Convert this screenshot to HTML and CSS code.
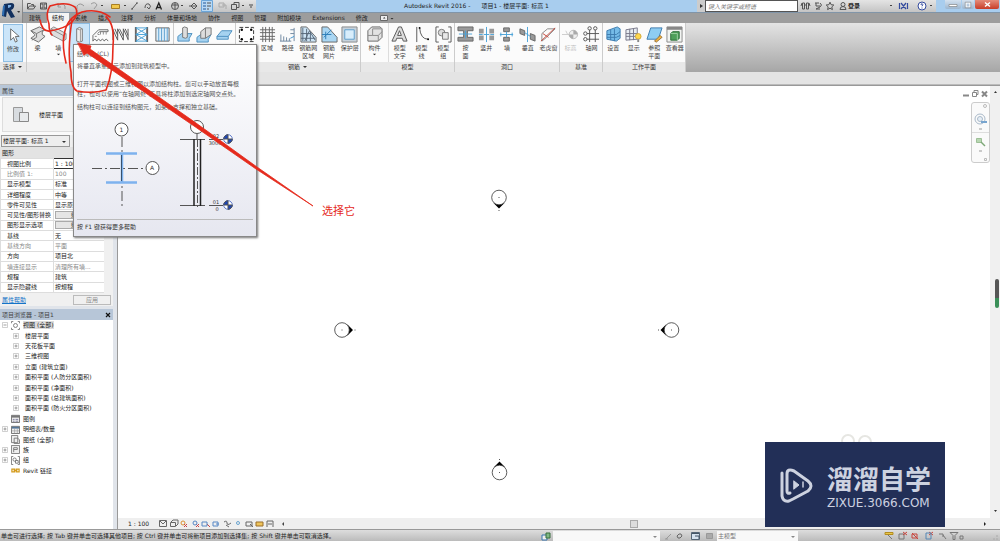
FILE: index.html
```html
<!DOCTYPE html>
<html lang="zh-CN">
<head>
<meta charset="utf-8">
<title>Autodesk Revit 2016 - 项目1</title>
<link rel="stylesheet" href="styles.css">
</head>
<body>
<svg class="defs" aria-hidden="true">
  <symbol id="dot-menu" viewBox="0 0 6 6"><path d="M1 2h4L3 4z" fill="#333"/></symbol>
  <symbol id="plus" viewBox="0 0 6 6"><path d="M.5.5h5v5h-5z" fill="#fff" stroke="#bbb" stroke-width=".7"/><path d="M1.500 3h3M3 1.500v3" stroke="#777" stroke-width=".7"/></symbol>
  <symbol id="minus" viewBox="0 0 6 6"><path d="M.5.5h5v5h-5z" fill="#fff" stroke="#bbb" stroke-width=".7"/><path d="M1.500 3h3" stroke="#777" stroke-width=".7"/></symbol>
  <symbol id="level" viewBox="0 0 10 10"><circle cx="5" cy="5" r="4.300" fill="#fff" stroke="#1c46b8" stroke-width=".7"/><path d="M5 5V.7A4.300 4.300 0 0 0 .7 5zM5 5v4.300A4.300 4.300 0 0 0 9.300 5z" fill="#1c46b8"/></symbol>
</svg>

<header class="header">
  <button class="app" aria-label="应用程序菜单">
    <svg width="22" height="22" viewBox="0 0 22 22"><path d="M4 3l7-1q4 0 3 4-1 3-3 3l4 7-4 1-4-7-1 6-4-1z" fill="#12305e"/><path d="M8 4h3q1 2-3 3z" fill="#7fb2e6"/><path d="M3 5l2-1-1 11-2-1z" fill="#2f6fb5"/><path d="M17 10h3l-1 2z" fill="#333"/></svg>
  </button>
  <div class="titlebar">
    <div class="quick">
      <svg width="233" height="12" viewBox="0 0 233 12" fill="none" stroke="#555" stroke-width="1">
        <path d="M4.500 9V3.500h3l1 1h2v2M4.500 9h6l2-3h-6zM17.500 3h6v6h-6zM19 3v2h3V3M19 9V7h3v2"/>
        <path d="M35 6q4-4 7 0v3M35 3v4h3M61 6q-4-4-7 0v3M68 4q4-3 6 1l-3 4" stroke="#999"/>
        <path d="M88.500 4.500h8v4h-8z" fill="#f1c84b" stroke="#a87e24"/><path d="M109 9l5-6M108 9h2M113 3h2M122 8q0-5 4-4 3 2 0 5l-2-2"/>
        <path d="M133 9.500l2.800-6.500 2.700 6.500M134 7.500h4" stroke="#222" stroke-width="1.300"/>
        <circle cx="152" cy="6" r="3.500" fill="#ccc"/><path d="M149 5h6M152 3v6M166 6h8M168 6l3-3 3 3-3 3z"/>
        <path d="M178.500.500h11v11h-11z" fill="#b8d9f5" stroke="#6ba6da"/><path d="M180 3h3M180 6h3M180 9h3" stroke="#23589b"/><path d="M184 3h4M184 6h4M184 9h2"/>
        <path d="M196 3h5v4h-5zM199 5h4v4" stroke="#aaa"/><path d="M208.500 4.500h5v5h-5zM211 4V2.500h5v5h-2"/>
        <path d="M27 5.500h2M48 5.500h2M78 5.500h2M101 5.500h2M158 5.500h2M219 5.500h2M226 5h4M227 7h2" stroke="#444"/>
      </svg>
    </div>
    <h1 class="title"><span>Autodesk Revit 2016 -</span><span>项目1 - 楼层平面: 标高 1</span></h1>
    <button class="expand" aria-label="展开搜索"><svg width="8" height="12" viewBox="0 0 8 12"><path d="M3 4v4l3-2z" fill="#333"/></svg></button>
    <input class="search" aria-label="搜索" placeholder="键入关键字或短语">
    <div class="info">
      <svg width="50" height="12" viewBox="0 0 50 12" fill="none" stroke="#555"><path d="M4.500 3v6h2V3zM8.500 3v6h2V3zM3 6l1-3M12 6l-1-3M6 5h3"/><path d="M17 3h4M18 3v3h4M22 3q3 2 0 4l-4 2h4"/><path d="M32 2.200l1.100 2.500 2.700.3-2 1.900.6 2.700-2.400-1.400-2.400 1.400.6-2.700-2-1.900 2.700-.3z"/><circle cx="45" cy="4.500" r="2"/><path d="M42 9.500q0-3 3-3t3 3z"/></svg>
      <button class="login">登录</button>
      <svg class="help" width="52" height="12" viewBox="0 0 52 12" fill="none" stroke="#334a9e"><path d="M6 5.500h2" stroke="#444"/><path d="M17 3l5 6M22 3l-5 6M15.500 3v6M23.500 3v6" stroke-width="1.200"/><circle cx="38" cy="6" r="4" fill="#fff"/><path d="M37 5q0-1.500 1.200-1.300T38 6.300M38 7.500v1"/><path d="M46 5.500h2" stroke="#444"/></svg>
    </div>
    <div class="wincontrols">
      <button aria-label="最小化"><svg width="16" height="9" viewBox="0 0 16 9"><path d="M4 4.500h8v2H4z" fill="#fff" stroke="#777" stroke-width=".6"/></svg></button>
      <button aria-label="还原"><svg width="12" height="9" viewBox="0 0 12 9"><path d="M4 3h4v4H4z" fill="none" stroke="#fff" stroke-width="1.200"/><path d="M3.200 2.200h5.600v5.600H3.200z" fill="none" stroke="#777" stroke-width=".5"/></svg></button>
      <button class="close" aria-label="关闭"><svg width="24" height="9" viewBox="0 0 24 9"><path d="M10 2.500l5 4M15 2.500l-5 4" stroke="#fff" stroke-width="1.500"/></svg></button>
    </div>
  </div>
  <nav class="tabs">
    <button>建筑</button><button class="active">结构</button><button>系统</button><button>插入</button><button>注释</button><button>分析</button><button>体量和场地</button><button>协作</button><button>视图</button><button>管理</button><button>附加模块</button><button>Extensions</button><button>修改</button>
    <button class="toggle" aria-label="显示选项"><svg width="14" height="8" viewBox="0 0 14 8"><path d="M.5 1.500h7v5h-7z" fill="#eee" stroke="#666"/><path d="M3 4.500h2.500L4.200 3zM10.500 4h3L12 5.500z" fill="#333"/></svg></button>
  </nav>
</header>

<div class="ribbon">
  <section class="panel p-select"><div class="tools">
    <button class="tool on"><svg viewBox="0 0 18 18"><path d="M6 2v12l3-3 2 5 2-1-2-5h4z" fill="#fff" stroke="#666"/></svg>修改</button>
  </div><h2>选择<svg><use href="#dot-menu"/></svg></h2></section>
  <section class="panel p-struct" aria-label="结构"><div class="tools">
    <button class="tool"><svg viewBox="0 0 18 18"><path d="M2 5l9-4 6 3-3 2v3l3 2-7 6-8-4 4-3V9z" fill="#ddd" stroke="#666"/><path d="M2 5l6 3 8-4M8 8v4l-5 3" fill="none" stroke="#777"/></svg>梁</button>
    <button class="tool"><svg viewBox="0 0 18 18"><path d="M1 3l3-2 13 7v6l-3 2L1 9z" fill="#ddd" stroke="#888"/><path d="M1 3l13 7v6M14 10l3-2" fill="none" stroke="#888"/></svg>墙<svg class="more"><use href="#dot-menu"/></svg></button>
    <button class="tool on" aria-label="柱"><svg viewBox="0 0 18 18"><path d="M6 3q3-3 6 0v13q-3 2-6 0z" fill="#eee" stroke="#777"/><path d="M6 3q3 2 6 0M10 4v12" fill="none" stroke="#999"/></svg></button>
    <button class="tool" aria-label="楼板"><svg viewBox="0 0 18 18"><path d="M1 16V10l6-6h10v2H8l-2 2M1 16q2-4 4 0 2-4 4 0 2-4 4 0 2-4 4 0" fill="none" stroke="#666"/><path d="M3 11h2M6 9h2M9 6v3M12 6v3M15 6v3" stroke="#888"/></svg></button>
    <button class="tool" aria-label="桁架"><svg viewBox="0 0 18 18"><path d="M1 3v12M17 3v12M1 4l5 11V3l6 12V3l5 11M3 3l3 7M8 3l4 8M14 3l3 7" fill="none" stroke="#555"/></svg></button>
    <button class="tool" aria-label="支撑"><svg viewBox="0 0 18 18"><path d="M3 1v16M15 1v16" stroke="#666" stroke-width="2"/><path d="M3 2h12M3 9h12M3 16h12M3 2l12 7M15 2L3 9M3 9l12 7M15 9L3 16" fill="none" stroke="#4aa3d8"/></svg></button>
    <button class="tool" aria-label="梁系统"><svg viewBox="0 0 18 18"><path d="M2 2h14v14H2z" fill="#dceefa" stroke="#666"/><path d="M5 2v14M8 2v14M11 2v14M14 2v14" stroke="#5b9fce"/></svg></button>
  </div><h2></h2></section>
  <section class="panel p-base" aria-label="基础"><div class="tools">
    <button class="tool" aria-label="独立"><svg viewBox="0 0 18 18"><path d="M2 11l4-3h11l-3 5v3H2z" fill="#a5d2f0" stroke="#4d8fbf"/><path d="M7 2l2-1 3 1v10l-2 1-3-1z" fill="#ddd" stroke="#777"/></svg></button>
    <button class="tool" aria-label="条形"><svg viewBox="0 0 18 18"><path d="M1 12l4-3h11l-3 5v3H1z" fill="#a5d2f0" stroke="#4d8fbf"/><path d="M5 6l5-4h6v7l-6 4H5z" fill="#ddd" stroke="#777"/><path d="M10 2v11" stroke="#777"/></svg></button>
    <button class="tool" aria-label="板"><svg viewBox="0 0 18 18"><path d="M1 11l5-6h11l-4 6v3H1z" fill="#a5d2f0" stroke="#4d8fbf"/><path d="M1 11h12" stroke="#4d8fbf"/></svg></button>
  </div><h2></h2></section>
  <section class="panel p-rebar"><div class="tools">
    <button class="tool" aria-label="钢筋"><svg viewBox="0 0 18 18"><path d="M1.500 1.500h15v15h-15z" fill="#fff" stroke="#333" stroke-dasharray="4 2"/><circle cx="4" cy="4" r="1.300"/><circle cx="14" cy="4" r="1.300"/><circle cx="4" cy="14" r="1.300"/><circle cx="14" cy="14" r="1.300"/></svg></button>
    <button class="tool"><svg viewBox="0 0 18 18"><path d="M4 1v16M7 1v16M11 1v16M14 1v16M1 4h16M1 7h16M1 11h16M1 14h16" stroke="#666"/></svg>区域</button>
    <button class="tool"><svg viewBox="0 0 18 18"><path d="M2 16V9M5 16v-5M8 16v-4M11 16v-3M1 16h12M16 2v14M12 4h4M12 8h4" stroke="#6e87a0" fill="none"/><path d="M12 13l4-2" stroke="#3f93ce"/></svg>路径</button>
    <button class="tool"><svg viewBox="0 0 18 18"><path d="M1 1h6l10 11v5H1z" fill="#cde4f5" stroke="#666"/><path d="M3 2v14M7 3v13M11 7v9M1 8h10M1 13h15M5 16l5-11 6 10" stroke="#567" fill="none"/></svg>钢筋网<br>区域</button>
    <button class="tool"><svg viewBox="0 0 18 18"><path d="M1 1h6l10 11v5H1z" fill="#a9d6f3" stroke="#666"/><path d="M3 12l8-8M5 14V6M1 9h10" stroke="#2d7db8"/></svg>钢筋<br>网片</button>
    <button class="tool"><svg viewBox="0 0 18 18"><path d="M1 1h16v16H1z" fill="#c6d2dc" stroke="#888"/><path d="M4 4h10v10H4z" fill="#d8edfb" stroke="#5c9dcb"/></svg>保护层</button>
  </div><h2>钢筋<svg><use href="#dot-menu"/></svg></h2></section>
  <section class="panel p-model"><div class="tools">
    <button class="tool lone"><svg viewBox="0 0 18 18"><path d="M2 5l4-4h9l2 2v9l-4 4H2z" fill="#e3e3e3" stroke="#666"/><path d="M7 3v7H2M7 10h6l4-4M13 10v6M7 3h9" fill="none" stroke="#888"/></svg>构件<svg class="more"><use href="#dot-menu"/></svg></button>
    <button class="tool"><svg viewBox="0 0 18 18"><path d="M1 16L8 1h3l6 15h-4l-1-3H6l-1 3zM7 10h4L9 5z" fill="#ddd" stroke="#555"/></svg>模型<br>文字</button>
    <button class="tool"><svg viewBox="0 0 18 18"><path d="M4 1v16M7 2q1 12 9 12" fill="none" stroke="#555"/><circle cx="7" cy="2" r="1"/><circle cx="16" cy="14" r="1"/></svg>模型<br>线</button>
    <button class="tool"><svg viewBox="0 0 18 18"><path d="M4 1H1v16h3M14 1h3v16h-3" fill="none" stroke="#555"/><circle cx="7" cy="7" r="3.500" fill="#ddd" stroke="#777"/><path d="M8 7h6v7H8z" fill="#e8e8e8" stroke="#777"/></svg>模型<br>组</button>
  </div><h2>模型</h2></section>
  <section class="panel p-open"><div class="tools">
    <button class="tool"><svg viewBox="0 0 18 18"><path d="M1 1h16v4h-6v7h6v4H1v-4h6V5H1z" fill="#999" stroke="#666"/><path d="M2 8.500h14M9 5v8" stroke="#4aa3d8"/></svg>按<br>面</button>
    <button class="tool"><svg viewBox="0 0 18 18"><path d="M1 3h5v5H1zM12 3h5v5h-5zM1 10h5v5H1zM12 10h5v5h-5z" fill="#999"/><path d="M9 1v16M6 9h6M1 9h4M13 9h4" stroke="#4aa3d8"/></svg>竖井</button>
    <button class="tool"><svg viewBox="0 0 18 18"><path d="M6 2h6v4H6zM6 12h6v4H6z" fill="#999" stroke="#666"/><path d="M2 9h14M9 6v6M3 7v4M15 7v4" stroke="#4aa3d8"/></svg>墙</button>
    <button class="tool"><svg viewBox="0 0 18 18"><path d="M1 3l5 2v5L1 8zM12 8l5 2v6l-5-2z" fill="#999" stroke="#666"/><path d="M9 1v16M6 7l6 4" stroke="#4aa3d8"/></svg>垂直</button>
    <button class="tool"><svg viewBox="0 0 18 18"><path d="M2 16V8l6-5h8M2 16l5-4 9-9" fill="none" stroke="#888"/><path d="M1 16L16 2M3 8l6 4" stroke="#c6483c"/></svg>老虎窗</button>
  </div><h2>洞口</h2></section>
  <section class="panel p-datum"><div class="tools">
    <button class="tool" disabled><svg viewBox="0 0 18 18"><path d="M0 9h8M4 5l2 4" stroke="#ccc"/><circle cx="12" cy="9" r="4.500" fill="#eee" stroke="#bbb"/><path d="M12 9V4.500A4.500 4.500 0 0 1 16.500 9zM12 9v4.500A4.500 4.500 0 0 1 7.500 9z" fill="#aaa"/></svg>标高</button>
    <button class="tool"><svg viewBox="0 0 18 18" fill="none" stroke="#555"><path d="M7 4v13M13 4v13M4 8h13M4 14h13"/><circle cx="7" cy="2.500" r="1.800"/><circle cx="13" cy="2.500" r="1.800"/><circle cx="2.500" cy="8" r="1.800"/><circle cx="2.500" cy="14" r="1.800"/></svg>轴网</button>
  </div><h2>基准</h2></section>
  <section class="panel p-plane"><div class="tools">
    <button class="tool"><svg viewBox="0 0 18 18"><path d="M2 5l11-4 3 2v10l-4 3-10-2z" fill="#76bce8" stroke="#3d7bae"/><path d="M2 9l10 0 4-3M6 4v11M10 3v13M2 12h10l4-2" fill="none" stroke="#3d7bae"/></svg>设置</button>
    <button class="tool"><svg viewBox="0 0 18 18"><path d="M1 4l12-2v12L1 15z" fill="#e8edf2" stroke="#778"/><path d="M1 8h12M1 11h12M5 3v12M9 3v12" stroke="#778"/><circle cx="14" cy="11" r="3" fill="#ffd84d" stroke="#d0a83c"/><path d="M13 14h2v3h-2z" fill="#888"/></svg>显示</button>
    <button class="tool"><svg viewBox="0 0 18 18"><path d="M5 2h12l-4 12H1z" fill="#8ecdf2" stroke="#3d7bae"/><path d="M9 16l6-6 2 2-6 5z" fill="#f0b33d" stroke="#96713a"/></svg>参照<br>平面</button>
    <button class="tool"><svg viewBox="0 0 18 18"><path d="M1 1h16v16H1z" fill="#f2f4f2" stroke="#888"/><path d="M1 1h16v3H1z" fill="#888"/><path d="M5 8l2-2h7v7l-2 2H5z" fill="#4da05a" stroke="#2c6b38"/><path d="M5 8h7v7" fill="none" stroke="#9bd0a2"/></svg>查看器</button>
  </div><h2>工作平面</h2></section>
</div>
<div class="options"></div>

<main class="work">
  <aside class="side">
    <section class="props">
      <h2 class="caption">属性</h2>
      <div class="type"><div class="typebox"><svg width="20" height="20" viewBox="0 0 20 20"><path d="M2.500 2.500h9v14h-9z" fill="#d8dce0" stroke="#999"/><path d="M8.500 7.500h9v9h-9z" fill="#e8eaec" stroke="#888"/></svg><span>楼层平面</span></div></div>
      <div class="chooser"><select aria-label="类型"><option>楼层平面: 标高 1</option></select></div>
      <h3>图形</h3>
      <table class="grid">
        <tr><th>视图比例</th><td class="edit">1 : 100</td></tr>
        <tr class="dim"><th>比例值 1:</th><td>100</td></tr>
        <tr><th>显示模型</th><td>标准</td></tr>
        <tr><th>详细程度</th><td>中等</td></tr>
        <tr><th>零件可见性</th><td>显示原状态</td></tr>
        <tr><th>可见性/图形替换</th><td><button class="cell">编辑</button></td></tr>
        <tr><th>图形显示选项</th><td><button class="cell">编辑</button></td></tr>
        <tr><th>基线</th><td>无</td></tr>
        <tr class="dim"><th>基线方向</th><td>平面</td></tr>
        <tr><th>方向</th><td>项目北</td></tr>
        <tr class="dim"><th>墙连接显示</th><td>清理所有墙...</td></tr>
        <tr><th>规程</th><td>建筑</td></tr>
        <tr><th>显示隐藏线</th><td>按规程</td></tr>
      </table>
      <div class="apply"><a href="#help">属性帮助</a><button>应用</button></div>
    </section>
    <section class="browser">
      <h2 class="caption"><span>项目浏览器 - 项目1</span><button aria-label="关闭"><svg width="6" height="6" viewBox="0 0 6 6"><path d="M1 1l4 4M5 1L1 5" stroke="#111" stroke-width="1.200"/></svg></button></h2>
      <ul class="tree">
        <li><svg class="tw"><use href="#minus"/></svg><svg class="ic" viewBox="0 0 10 10" fill="none" stroke="#777"><path d="M.5 2.500v-2h2M7.500.5h2v2M.5 7.500v2h2M9.500 7.500v2h-2"/><circle cx="5" cy="5" r="2.200"/></svg><b>视图 (全部)</b></li>
        <li class="sub"><svg class="tw"><use href="#plus"/></svg>楼层平面</li>
        <li class="sub"><svg class="tw"><use href="#plus"/></svg>天花板平面</li>
        <li class="sub"><svg class="tw"><use href="#plus"/></svg>三维视图</li>
        <li class="sub"><svg class="tw"><use href="#plus"/></svg>立面 (建筑立面)</li>
        <li class="sub"><svg class="tw"><use href="#plus"/></svg>面积平面 (人防分区面积)</li>
        <li class="sub"><svg class="tw"><use href="#plus"/></svg>面积平面 (净面积)</li>
        <li class="sub"><svg class="tw"><use href="#plus"/></svg>面积平面 (总建筑面积)</li>
        <li class="sub"><svg class="tw"><use href="#plus"/></svg>面积平面 (防火分区面积)</li>
        <li><i class="tw"></i><svg class="ic" viewBox="0 0 10 10"><path d="M.5 1.500h9v8h-9z" fill="#eee" stroke="#666"/><path d="M1 2h8v2H1z" fill="#777"/><path d="M2 6h2M5 6h3M2 8h2M5 8h3" stroke="#779"/></svg>图例</li>
        <li><svg class="tw"><use href="#plus"/></svg><svg class="ic" viewBox="0 0 10 10"><path d="M.5 1.500h9v8h-9z" fill="#eee" stroke="#666"/><path d="M1 2h8v2H1z" fill="#579"/><path d="M1 6.500h8M4 4v5M7 4v5" stroke="#999" stroke-width=".7"/></svg>明细表/数量</li>
        <li><i class="tw"></i><svg class="ic" viewBox="0 0 10 10" fill="#eee" stroke="#777"><path d="M.5.5h7v8h-7zM3.500 3.500h4l2 2v4h-6z"/></svg>图纸 (全部)</li>
        <li><svg class="tw"><use href="#plus"/></svg><svg class="ic" viewBox="0 0 10 10" fill="#eee" stroke="#777"><path d="M.5.5h9v9h-9z"/><path d="M3 8V3h4v2H3"/></svg>族</li>
        <li><svg class="tw"><use href="#plus"/></svg><svg class="ic" viewBox="0 0 10 10" fill="none" stroke="#777"><path d="M2.500.5h-2v9h2M7.500.5h2v9h-2M5 5h3v3H5z"/><circle cx="4" cy="4" r="1.800"/></svg>组</li>
        <li><i class="tw"></i><svg class="ic" viewBox="0 0 10 10" fill="none" stroke="#d49b1c" stroke-width="1.400"><path d="M1 3.500h3v3H1zM6 3.500h3v3H6zM3 5h4"/></svg>Revit 链接</li>
      </ul>
    </section>
  </aside>

  <section class="view">
    <div class="canvas">
      <svg class="drawing" width="870" height="432" viewBox="118 86 870 432">
        <defs><g id="elev"><path d="M-6 5L0 11 6 5Q0 9-6 5z" fill="#000"/><circle r="7.300" fill="#fff" stroke="#333" stroke-width=".8"/><path d="M-.5 0h1M-.5 13h1" stroke="#555"/></g></defs>
        <use href="#elev" transform="translate(499 197.500)"/>
        <use href="#elev" transform="translate(342 330) rotate(-90)"/>
        <use href="#elev" transform="translate(671.500 330) rotate(90)"/>
        <use href="#elev" transform="translate(499.500 472.500) rotate(180)"/>
        <g fill="none" stroke="#e6e6e2" stroke-width="2"><circle cx="848" cy="441" r="6"/><circle cx="865" cy="442" r="6"/></g>
      </svg>
      <div class="mdi"><svg width="26" height="8" viewBox="0 0 26 8" fill="none" stroke="#888"><path d="M1 5.500h6" stroke-width="2"/><path d="M10.500 2.500h4v4h-4zM12 2V.5h4v4h-2"/><path d="M20 1.500l5 5M25 1.500l-5 5" stroke-width="2"/></svg></div>
      <div class="navbar"><svg width="17" height="59" viewBox="0 0 17 59" fill="none" stroke="#bbb"><circle cx="13" cy="3" r="1.500"/><path d="M0 29.500h17" stroke="#ddd"/><path d="M12.500 55.500h2v2h-2z"/><circle cx="8" cy="16" r="5" stroke="#a9b9c9"/><circle cx="8" cy="16" r="2.500" fill="#e6eef6" stroke="#a9b9c9"/><path d="M9 19h6" stroke="#78a5cf" stroke-width="2"/><path d="M4.500 35.500h5v4h-5z" fill="#b8d7b2" stroke="#9dbf97"/><path d="M9 39l4 4" stroke="#7da777" stroke-width="1.500"/><path d="M7 26h3M7 48h3" stroke-width="1.500"/></svg></div>
    </div>
    <div class="vscroll"><svg width="9" height="5" viewBox="0 0 9 5"><path d="M3 3l1.500-2L6 3z" fill="#333"/></svg><svg width="9" height="5" viewBox="0 0 9 5"><path d="M3 1h3L4.500 3z" fill="#333"/></svg></div>
    <div class="viewbar">
      <span class="scale">1 : 100</span>
      <svg width="116" height="10" viewBox="0 0 116 10" fill="none" stroke="#666"><path d="M.5 1.500h7v6h-7zM1 2l3 3 3-3"/><path d="M11.500 3.500h5v4h-5zM12 3l2-2h5v4l-2 2"/><circle cx="24" cy="4" r="2" stroke="#dd9233"/><path d="M25 5l3 3m0-3l-3 3M37 5l3 3m0-3l-3 3M48 5l3 3" stroke="#c44"/><circle cx="36" cy="4" r="2" stroke="#5787c5"/><path d="M43 3h5v4h-5zM54 3h5v4h-5zM57 5h3" stroke="#5787c5"/><path d="M65 3q3-2 3 1t4 0M67 6l3 2"/><circle cx="79" cy="4" r="1.500" stroke="#6aa4cf"/><path d="M87 3h6v4h-6zM91 5l3 3"/><path d="M97 3h7v4h-7z" fill="#efc45b" stroke="#9a6e2a"/><path d="M108 8V2h6M114 2v6M109 5h4"/></svg>
      <svg class="collapse" width="5" height="8" viewBox="0 0 5 8"><path d="M3 2v4L1 4z" fill="#444"/></svg>
      <div class="hscroll"><i></i></div>
      <svg width="20" height="8" viewBox="0 0 20 8"><path d="M4 2v4l2-2z" fill="#222"/></svg>
    </div>
  </section>
</main>

<footer class="status">
  <span class="message">单击可进行选择; 按 Tab 键并单击可选择其他项目; 按 Ctrl 键并单击可将新项目添加到选择集; 按 Shift 键并单击可取消选择。</span>
  <svg width="12" height="10" viewBox="0 0 12 10"><path d="M1 4h5v5H1z" fill="#eee" stroke="#3774af"/><path d="M5 2h4v5H5z" fill="#7fb784" stroke="#376f3c"/></svg>
  <div class="chooser workset"><select aria-label="工作集"><option></option></select></div>
  <svg width="57" height="10" viewBox="0 0 57 10" fill="none" stroke="#999"><path d="M6 8l5-5M5 8h3"/><path d="M17 5l2-2h2l1 2-2 2h-2z" stroke="#666"/><path d="M31.500 1.500h8v7h-8z" fill="#d5e2ef" stroke="#567"/><path d="M32 2.500h7M35 5h4v3" stroke="#456"/><path d="M46.500 2.500h6v5h-6z" fill="#aaa"/></svg>
  <div class="chooser option"><select aria-label="设计选项"><option>主模型</option></select></div>
  <svg class="filters" width="84" height="10" viewBox="0 0 84 10" fill="none" stroke="#777"><path d="M1 1.500h8v2H1z" fill="#e8c64a" stroke="#b38c20"/><path d="M4 4l4 4M15 3h5v5h-5z"/><path d="M19 1l4 3m0-3l-4 3M28 2l6 6M28 3h5v4h-5zM45 1l4 3m0-3l-4 3" stroke="#c8443c"/><path d="M42 2h5v6h-5z" stroke="#5787b5"/><path d="M55 3h4v3M59 4l3 4M66 1.500h8l-3 3v4h-2v-4zM76 5h3v3h-3z"/></svg>
  <svg width="32" height="10" viewBox="0 0 32 10"><path d="M28 8h2M25 8h2M28 5h2" stroke="#aaa"/></svg>
</footer>

<aside class="tooltip" role="tooltip">
  <h4>结构柱 (CL)</h4>
  <p>将垂直承重图元添加到建筑模型中。</p>
  <p>打开平面视图或三维视图以添加结构柱。您可以手动放置每根<br>柱，也可以使用“在轴网处”工具将柱添加到选定轴网交点处。</p>
  <p>结构柱可以连接到结构图元，如梁、支撑和独立基础。</p>
  <svg class="figure" width="182" height="104" viewBox="74 115 182 104" fill="none" stroke="#555">
    <path d="M122 137v70M92 168.500h54" stroke-dasharray="10 3 2 3"/>
    <path d="M106 153.500h31M106 182.500h31M122 154v28" stroke="#7eb2ee" stroke-width="2.500"/><path d="M121.500 155v26" stroke="#36516f"/>
    <circle cx="121.500" cy="129.500" r="6.500" fill="#fff"/><circle cx="152.500" cy="168" r="6.500" fill="#fff"/>
    <circle cx="197" cy="127" r="6.500" fill="#fff"/><path d="M197 134v6M180 139.500h25M180 205.500h25M209 139.500h14M209 205.500h14"/>
    <path d="M194 139v67M200.500 139v67" stroke="#222" stroke-width="1.500"/><path d="M197.500 139v70" stroke-dasharray="8 2 2 2"/>
    <svg x="223" y="134" width="10" height="10"><use href="#level"/></svg><svg x="223" y="200" width="10" height="10"><use href="#level"/></svg>
    <g fill="#333" stroke="none" font-size="6" text-anchor="middle"><text x="121.500" y="132">1</text><text x="152" y="170">A</text></g>
    <g fill="#333" stroke="none" font-size="5" text-anchor="middle"><text x="216" y="138">02</text><text x="215" y="145">3000</text><text x="216" y="204">01</text><text x="217" y="211">0</text></g>
  </svg>
  <footer>按 F1 键获得更多帮助</footer>
</aside>

<div class="brand">
  <svg width="36" height="38" viewBox="0 0 36 38" fill="none" stroke="#cdd2e0" stroke-width="3" stroke-linecap="round" stroke-linejoin="round"><path d="M3 7v23q1 6 7 5l4-2 15-8q6-5 0-10L15 5Q8 2 8 8v17q0 3 3 2"/><path d="M15 15l5 4-5 4z" fill="#cdd2e0" stroke-width="1"/><path d="M24 16v5" stroke-width="1.500"/></svg>
  <div><strong>溜溜自学</strong><span>ZIXUE.3066.COM</span></div>
</div>

<div class="edge" aria-hidden="true"></div>
<div class="note">选择它</div>
<svg class="marks" width="330" height="215" viewBox="0 0 330 215" fill="none" stroke="#e52a1c" stroke-width="1.600" stroke-linecap="round">
  <path d="M40 20q2 12 10 11 14-2 22-9 8-9 3-15Q66 1 50 6q-5 7-1 18 0 8 3 11"/>
  <path d="M110 17Q98 8 82 12 66 18 64 36q-2 10 2 27M72 20q-5 32-1 52 0 16 6 19 16 3 29-1 7-16 7-44 2-22-7-29"/>
  <path d="M78 43L91 46 90 49 196 123 257 167 313 206 256 169 194 126 87 53 84 55Z" fill="#e52a1c" stroke-width=".8" stroke-linejoin="round"/>
</svg>
</body>
</html>
```
FILE: styles.css
```css
* { box-sizing: border-box; }
body {
  margin: 0;
  min-height: 100vh;
  display: flex;
  flex-direction: column;
  position: relative;
  font: 6px/8px "DejaVu Sans", "Noto Sans CJK SC", sans-serif;
  color: #222;
  background: #e4e4e4;
  overflow: hidden;
}
button, input, select { font: inherit; color: inherit; margin: 0; padding: 0; border: 0; background: none; border-radius: 0; }
h1, h2, h3, h4, p, ul { margin: 0; padding: 0; font: inherit; }
svg { display: block; flex: none; }
.defs { position: absolute; width: 0; height: 0; }

.header { display: grid; grid-template: 13px 10px / 23px 1fr; background: #9d9d9d; }
.app { grid-row: 1 / 3; background: linear-gradient(#d5d5d5, #aaa); border-right: 1px solid #888; }
.titlebar { display: flex; background: #a8cdee; border-bottom: 1px solid #8195a8; }
.quick, .info { background: linear-gradient(#e4e4e4, #c4c4c4); }
.title { flex: 1; display: flex; justify-content: center; gap: 11px; line-height: 12px; white-space: nowrap; }
.expand { background: #ccc; }
.search { width: 93px; height: 12px; padding: 0 2px; background: #fff; border: 1px solid #555; font-style: italic; }
.search::placeholder { color: #777; }
.info { display: flex; width: 138px; }
.login { font-weight: 600; }
.help { margin-left: auto; }
.wincontrols { display: flex; width: 64px; height: 9px; padding-left: 9px; gap: 1px; }
.wincontrols button { height: 9px; background: linear-gradient(#d5e2ef, #9db6cf); border-radius: 0 0 2px 2px; }
.wincontrols .close { background: linear-gradient(#e48c7a, #c83d28); }

.tabs { display: flex; gap: 1px; padding-left: 1px; }
.tabs button { padding: 0 5px; line-height: 10px; }
.tabs .active { background: #f4f4f4; }
.tabs .toggle { padding: 1px 6px; }

.ribbon { display: flex; height: 49px; background: linear-gradient(#e4e4e4, #a6a6a6); }
.panel { display: flex; flex-direction: column; border-right: 1px solid #ccc; background: #fbfbfb; }
.panel h2 { display: flex; justify-content: center; align-items: center; height: 10px; background: #e8e8e8; color: #333; }
.panel h2 svg { width: 6px; height: 6px; margin-left: 2px; }
.tools { flex: 1; display: flex; }
.tool { flex: 1 1 0; min-width: 0; display: flex; flex-direction: column; align-items: center; padding-top: 3px; color: #444; white-space: nowrap; }
.tool > svg { width: 17px; height: 17px; margin-bottom: 1px; }
.tool > .more { width: 5px; height: 5px; }
.tool.on { background: #cbe5f9; outline: 1px solid #8dbde3; outline-offset: -1px; }
.tool:disabled { color: #bbb; }
.tool.lone { flex: 0 0 28px; border-right: 1px solid #ddd; }
.p-select { width: 27px; }
.p-select .tools { padding: 1px 3px 0; }
.p-struct { width: 147px; }
.p-base { width: 62px; }
.p-rebar { width: 125px; }
.p-model { width: 94px; }
.p-open { width: 105px; }
.p-datum { width: 43px; }
.p-plane { width: 83px; }
.options { height: 13px; border-bottom: 1px solid #bbb; }

.work { flex: 1; display: grid; grid-template-columns: 118px 1fr; min-height: 0; }
.side { display: flex; flex-direction: column; gap: 3px; padding-right: 4px; background: #e0e4ea; border-right: 1px solid #999; }
.props { background: #f0f0f0; }
.caption { display: flex; justify-content: space-between; align-items: center; height: 11px; padding: 0 2px; background: #b7c6d8; color: #444; }
.caption button { padding: 0; }
.type { padding: 1px 2px 3px; background: #fafafa; }
.typebox { display: flex; align-items: center; gap: 8px; height: 35px; padding-left: 8px; background: #f4f4f4; border: 1px solid #ddd; }
.chooser { position: relative; }
.chooser::after { content: ""; position: absolute; right: 3px; top: 50%; border: 2px solid transparent; border-top-color: #333; border-bottom: 0; }
.chooser select { appearance: none; display: block; width: 100%; height: 10px; padding: 0 1px; }
.props .chooser { width: 69px; margin-left: 1px; border: 1px solid #999; background: #eee; }
.props h3 { height: 11px; padding: 2px; background: #e3e3e3; }
.grid { width: 112px; height: 135px; border-collapse: collapse; table-layout: fixed; background: #fff; border-right: 8px solid #f0f0f0; }
.grid th, .grid td { padding: 0 1px; font-weight: inherit; text-align: left; white-space: nowrap; border: 1px solid #ddd; overflow: hidden; line-height: 8px; }
.grid th { width: 53px; padding-left: 6px; }
.grid .dim { color: #888; }
.grid .edit { border: 1px solid #333; }
.cell { display: block; width: 100%; height: 8px; padding-left: 15px; background: #e5e5e5; border: 1px solid #aaa; line-height: 6px; text-align: left; }
.apply { display: flex; justify-content: space-between; align-items: center; height: 13px; padding: 0 2px; }
.apply a { color: #1473c8; }
.apply button { width: 38px; height: 10px; border: 1px solid #bbb; color: #888; }
.browser { flex: 1; background: #fff; }
.tree { display: grid; height: 156px; grid-auto-rows: 1fr; padding-left: 2px; list-style: none; }
.tree li { display: flex; align-items: center; white-space: nowrap; }
.tree .sub { padding-left: 11px; gap: 6px; }
.tw { width: 6px; height: 6px; }
.ic { width: 9px; height: 9px; margin: 0 3px; }
.tree b { font-weight: inherit; background: #ddd; }

.view { display: grid; grid-template: 1fr 11px / 1fr 10px; background: #fff; border-top: 1px solid #999; min-width: 0; }
.canvas { position: relative; overflow: hidden; }
.drawing { position: absolute; left: 0; top: 0; }
.mdi { position: absolute; right: 2px; top: 4px; }
.navbar { position: absolute; right: 0; top: 16px; border: 1px solid #ccc; border-radius: 3px; background: #fafafa; }
.vscroll { display: flex; flex-direction: column; align-items: center; justify-content: space-between; padding: 4px 0; background: #f0f0f0; }
.viewbar { grid-column: 1 / 3; display: flex; align-items: center; padding-left: 10px; background: #efefef; }
.scale { width: 31px; white-space: nowrap; }
.collapse { margin-left: 6px; }
.hscroll { flex: 1; display: flex; padding-left: 344px; }
.hscroll i { width: 8px; height: 8px; background: #ddd; border: 1px solid #aaa; }

.status { display: flex; align-items: center; height: 12px; padding-left: 1px; background: linear-gradient(#ddd, #bbb); border-top: 1px solid #999; }
.message { flex: 0 1 540px; white-space: nowrap; }
.status .chooser { background: #f8f8f8; }
.status .chooser::after { border-top-color: #888; }
.workset { width: 107px; }
.option { width: 81px; color: #777; }
.filters { margin-left: auto; }

.tooltip { position: absolute; left: 73px; top: 44px; width: 184px; padding-top: 4px; background: linear-gradient(#fff, #e6e7f0); border: 1px solid #888; box-shadow: 1px 1px 2px #777; color: #555; }
.tooltip h4, .tooltip p { padding: 0 3px; line-height: 10px; white-space: nowrap; }
.tooltip h4 { margin-bottom: 2px; }
.tooltip p { margin-bottom: 3px; }
.tooltip p:nth-of-type(1) { margin-bottom: 8px; }
.tooltip footer { margin: 0 3px; padding: 3px 0 5px; border-top: 1px solid #bbb; color: #333; }

.brand { position: absolute; right: 55px; bottom: 14px; width: 180px; height: 85px; display: flex; align-items: center; gap: 12px; padding-left: 14px; background: #222f57; color: #cdd2e0; }
.brand div { display: flex; flex-direction: column; }
.brand strong { font: 700 26px/36px "Noto Sans CJK SC", sans-serif; white-space: nowrap; }
.brand span { font-size: 12px; line-height: 14px; }

.edge { position: absolute; right: 1px; top: 279px; width: 4px; height: 29px; border-radius: 2px; background: linear-gradient(#555 65%, #3a8f58 65%); }
.note { position: absolute; left: 322px; top: 205px; font-size: 11px; line-height: 14px; color: #e52a1c; }
.marks { position: absolute; left: 0; top: 0; pointer-events: none; }
```
